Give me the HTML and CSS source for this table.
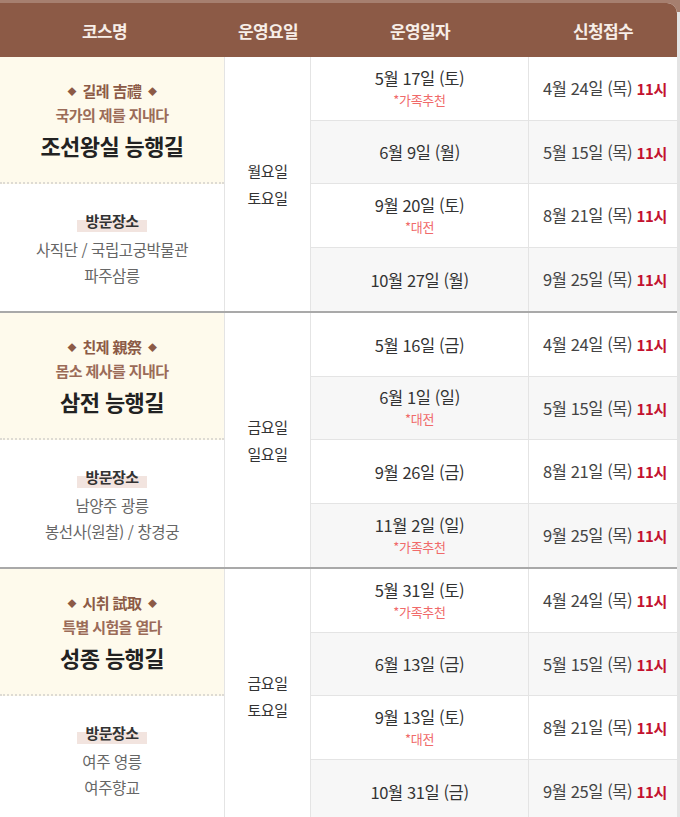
FILE: index.html
```html
<!DOCTYPE html>
<html lang="ko">
<head>
<meta charset="utf-8">
<link rel="stylesheet" href="styles.css">
</head>
<body>
<div class="wrap">
  <div class="table">
    <div class="head">
      <div class="hcell first">코스명</div>
      <div class="hcell">운영요일</div>
      <div class="hcell">운영일자</div>
      <div class="hcell">신청접수</div>
    </div>

    <div class="section">
      <div class="course">
        <div class="c-top">
          <div class="theme"><span class="dia">◆</span> 길례 吉禮 <span class="dia">◆</span></div>
          <div class="sub">국가의 제를 지내다</div>
          <div class="title">조선왕실 능행길</div>
        </div>
        <div class="c-bottom">
          <div class="visit"><span class="mark">방문장소</span></div>
          <div class="place">사직단 / 국립고궁박물관</div>
          <div class="place">파주삼릉</div>
        </div>
      </div>
      <div class="days"><div>월요일</div><div>토요일</div></div>
      <div class="date"><div class="d">5월 17일 (토)</div><div class="note">*가족추천</div></div>
      <div class="apply">4월 24일 (목) <b>11시</b></div>
      <div class="date alt"><div class="d">6월 9일 (월)</div></div>
      <div class="apply alt">5월 15일 (목) <b>11시</b></div>
      <div class="date"><div class="d">9월 20일 (토)</div><div class="note">*대전</div></div>
      <div class="apply">8월 21일 (목) <b>11시</b></div>
      <div class="date alt last"><div class="d">10월 27일 (월)</div></div>
      <div class="apply alt last">9월 25일 (목) <b>11시</b></div>
    </div>

    <div class="section">
      <div class="course">
        <div class="c-top">
          <div class="theme"><span class="dia">◆</span> 친제 親祭 <span class="dia">◆</span></div>
          <div class="sub">몸소 제사를 지내다</div>
          <div class="title">삼전 능행길</div>
        </div>
        <div class="c-bottom">
          <div class="visit"><span class="mark">방문장소</span></div>
          <div class="place">남양주 광릉</div>
          <div class="place">봉선사(원찰) / 창경궁</div>
        </div>
      </div>
      <div class="days"><div>금요일</div><div>일요일</div></div>
      <div class="date"><div class="d">5월 16일 (금)</div></div>
      <div class="apply">4월 24일 (목) <b>11시</b></div>
      <div class="date alt"><div class="d">6월 1일 (일)</div><div class="note">*대전</div></div>
      <div class="apply alt">5월 15일 (목) <b>11시</b></div>
      <div class="date"><div class="d">9월 26일 (금)</div></div>
      <div class="apply">8월 21일 (목) <b>11시</b></div>
      <div class="date alt last"><div class="d">11월 2일 (일)</div><div class="note">*가족추천</div></div>
      <div class="apply alt last">9월 25일 (목) <b>11시</b></div>
    </div>

    <div class="section">
      <div class="course">
        <div class="c-top">
          <div class="theme"><span class="dia">◆</span> 시취 試取 <span class="dia">◆</span></div>
          <div class="sub">특별 시험을 열다</div>
          <div class="title">성종 능행길</div>
        </div>
        <div class="c-bottom">
          <div class="visit"><span class="mark">방문장소</span></div>
          <div class="place">여주 영릉</div>
          <div class="place">여주향교</div>
        </div>
      </div>
      <div class="days"><div>금요일</div><div>토요일</div></div>
      <div class="date"><div class="d">5월 31일 (토)</div><div class="note">*가족추천</div></div>
      <div class="apply">4월 24일 (목) <b>11시</b></div>
      <div class="date alt"><div class="d">6월 13일 (금)</div></div>
      <div class="apply alt">5월 15일 (목) <b>11시</b></div>
      <div class="date"><div class="d">9월 13일 (토)</div><div class="note">*대전</div></div>
      <div class="apply">8월 21일 (목) <b>11시</b></div>
      <div class="date alt last"><div class="d">10월 31일 (금)</div></div>
      <div class="apply alt last">9월 25일 (목) <b>11시</b></div>
    </div>
  </div>
</div>
</body>
</html>
```

FILE: styles.css
```css
* { box-sizing: border-box; }
html, body { margin: 0; padding: 0; }
body {
  background: #ffffff;
  font-family: "Noto Sans CJK KR", "Noto Sans", sans-serif;
  color: #333;
  overflow: hidden;
}
.wrap {
  width: 680px;
  padding-top: 3px;
  background: linear-gradient(#a67f6f 0, #a67f6f 12px, #e4e4e4 12px);
}
.table {
  width: 677px;
  background: #fff;
  border-top-right-radius: 10px;
}
.head {
  display: grid;
  grid-template-columns: 225px 86px 218px 148px;
  height: 54px;
  background: #8c5a46;
  border-top-right-radius: 10px;
}
.hcell {
  display: flex;
  align-items: center;
  justify-content: center;
  color: #f7eee8;
  font-size: 17px;
  font-weight: 700;
  letter-spacing: -0.6px;
}
.hcell.first { padding-right: 16px; }

.section {
  display: grid;
  grid-template-columns: 225px 86px 218px 148px;
  grid-template-rows: 64px 63px 64px 63px;
  border-bottom: 2px solid #a9a9a9;
}
.course {
  grid-column: 1;
  grid-row: 1 / 5;
  display: grid;
  grid-template-rows: 127px 127px;
  border-right: 1px solid #e4e4e4;
}
.c-top {
  background: #fefaec;
  border-bottom: 2px dotted #dedbd4;
  display: flex;
  flex-direction: column;
  align-items: center;
  justify-content: center;
  padding-top: 2px;
}
.theme {
  color: #8c5a46;
  font-size: 15px;
  font-weight: 700;
  line-height: 23px;
  letter-spacing: -0.6px;
}
.dia {
  font-size: 9px;
  vertical-align: 2px;
  padding: 0 3px;
}
.sub {
  color: #9b6b58;
  font-size: 15px;
  font-weight: 700;
  line-height: 23px;
  letter-spacing: -0.6px;
}
.title {
  color: #222;
  font-size: 22px;
  font-weight: 700;
  line-height: 34px;
  margin-top: 2px;
  letter-spacing: -0.6px;
}
.c-bottom {
  display: flex;
  flex-direction: column;
  align-items: center;
  justify-content: center;
}
.visit { line-height: 26px; margin-bottom: 3px; }
.mark {
  display: inline-block;
  padding: 0 8px;
  font-size: 15px;
  font-weight: 700;
  color: #333;
  line-height: 23px;
  letter-spacing: -0.5px;
  background: linear-gradient(transparent 0, transparent 11px, #f2e4df 11px, #f2e4df 24px);
}
.place {
  color: #666;
  font-size: 15.5px;
  line-height: 26px;
  letter-spacing: -0.4px;
}
.days {
  grid-column: 2;
  grid-row: 1 / 5;
  display: flex;
  flex-direction: column;
  align-items: center;
  justify-content: center;
  border-right: 1px solid #e4e4e4;
  color: #333;
  font-size: 15px;
  line-height: 27px;
  letter-spacing: -0.4px;
}
.date, .apply {
  display: flex;
  flex-direction: column;
  align-items: center;
  justify-content: center;
  border-bottom: 1px solid #e4e4e4;
}
.date { border-right: 1px solid #e4e4e4; }
.alt { background: #f7f7f7; }
.last { border-bottom: none; }
.d {
  font-size: 16.5px;
  line-height: 22px;
  color: #333;
  letter-spacing: -0.4px;
}
.note {
  font-size: 13px;
  line-height: 22px;
  color: #f06a6a;
  letter-spacing: -0.3px;
}
.apply {
  display: block;
  text-align: center;
  padding-top: 20px;
  font-size: 16.5px;
  line-height: 22px;
  color: #444;
  letter-spacing: -0.4px;
  padding-left: 4px;
}
.apply b {
  color: #c3122f;
  font-weight: 700;
  font-size: 15px;
  letter-spacing: -0.3px;
}
```
